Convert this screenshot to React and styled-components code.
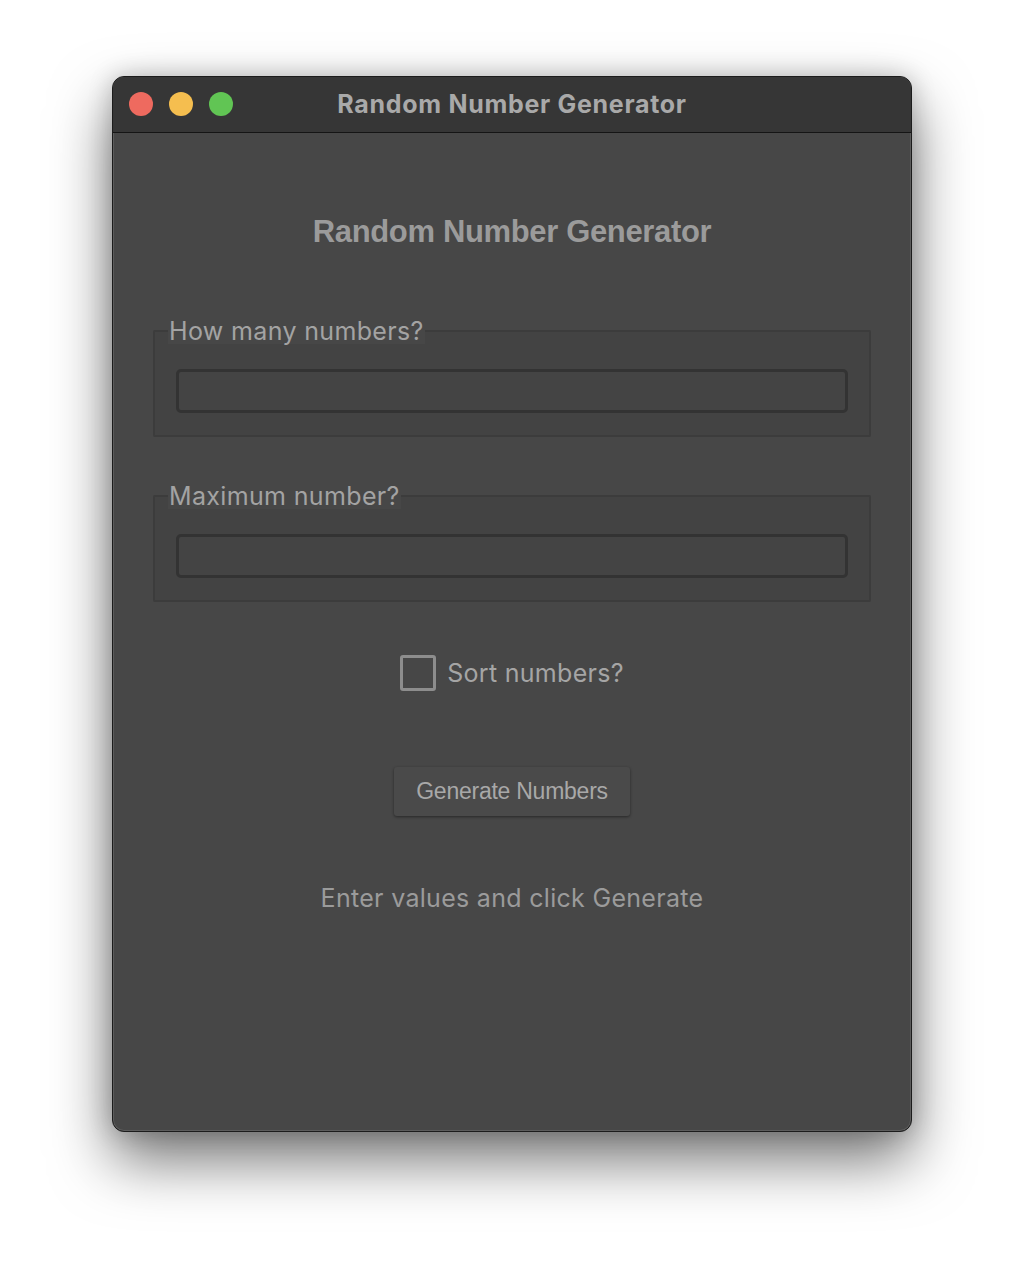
import React from 'react'
import styled, { createGlobalStyle } from 'styled-components'

const Global = createGlobalStyle`
  html, body {
    margin: 0;
    padding: 0;
    background: #ffffff;
  }
  * { box-sizing: border-box; }
`

const Page = styled.div`
  padding: 76px 112px 148px;
  font-family: Inter, "Noto Sans", sans-serif;
`

const Window = styled.div`
  width: 800px;
  height: 1056px;
  border-radius: 12px;
  background: #474747;
  border: 1px solid #1c1c1c;
  box-shadow: inset 0 0 0 1px #5c5c5c, 0 28px 60px rgba(0, 0, 0, 0.55), 0 0 24px rgba(0, 0, 0, 0.2);
  overflow: hidden;
  display: flex;
  flex-direction: column;
`

const TitleBar = styled.div`
  height: 56px;
  flex: none;
  background: #363636;
  border-bottom: 1px solid #151515;
  display: grid;
  grid-template-columns: 1fr auto 1fr;
  align-items: center;
  padding: 0 16px 2px;
`

const Lights = styled.div`
  display: flex;
  gap: 16px;
`

const Light = styled.span`
  width: 24px;
  height: 24px;
  border-radius: 50%;
  background: ${p => p.color};
`

const WindowTitle = styled.div`
  font-weight: 700;
  font-size: 25px;
  color: #a9a9a9;
  letter-spacing: 0.7px;
`

const Body = styled.div`
  flex: 1;
  display: flex;
  flex-direction: column;
  align-items: center;
  padding: 81px 40px 0;
`

const Heading = styled.h1`
  margin: 0 0 68px;
  font-family: "Liberation Sans", Arial, sans-serif;
  font-weight: 700;
  font-size: 31px;
  line-height: 36px;
  letter-spacing: -0.35px;
  color: #9b9b9b;
`

const Group = styled.fieldset`
  align-self: stretch;
  margin: 0 0 ${p => p.gap}px;
  padding: 25px 21px 22px;
  border: 2px solid #3c3c3c;
  border-radius: 2px;
  background: #434343;
  min-width: 0;
`

const Legend = styled.legend`
  margin-left: -8px;
  padding: 0 1px;
  font-size: 25px;
  line-height: 26px;
  letter-spacing: 0.35px;
  color: #a3a3a3;
  background: #474747;
`

const Field = styled.input`
  display: block;
  width: 100%;
  height: 44px;
  border: 3px solid #333333;
  border-radius: 5px;
  background: #444444;
  outline: none;
  color: #bdbdbd;
  font: inherit;
`

const CheckRow = styled.label`
  display: flex;
  align-items: center;
  gap: 11px;
  margin-bottom: 76px;
  font-size: 25px;
  letter-spacing: 0.3px;
  color: #a5a5a5;
`

const Box = styled.span`
  width: 36px;
  height: 36px;
  border: 3px solid #8d8d8d;
  border-radius: 3px;
`

const Button = styled.button`
  width: 236px;
  height: 49px;
  border: none;
  border-radius: 3px;
  background: #4a4a4a;
  box-shadow: 0 1px 3px rgba(0, 0, 0, 0.45);
  font-family: "Liberation Sans", Arial, sans-serif;
  font-size: 23px;
  letter-spacing: -0.25px;
  color: #a8a8a8;
  margin-bottom: 67px;
`

const Status = styled.p`
  margin: 0;
  font-size: 25px;
  line-height: 30px;
  letter-spacing: 0.3px;
  color: #9b9b9b;
`

export default function App() {
  return (
    <Page>
      <Global />
      <Window>
        <TitleBar>
          <Lights>
            <Light color="#ee6a5f" />
            <Light color="#f5be4f" />
            <Light color="#61c554" />
          </Lights>
          <WindowTitle>Random Number Generator</WindowTitle>
        </TitleBar>
        <Body>
          <Heading>Random Number Generator</Heading>
          <Group gap={46}>
            <Legend>How many numbers?</Legend>
            <Field />
          </Group>
          <Group gap={53}>
            <Legend>Maximum number?</Legend>
            <Field />
          </Group>
          <CheckRow>
            <Box />
            Sort numbers?
          </CheckRow>
          <Button>Generate Numbers</Button>
          <Status>Enter values and click Generate</Status>
        </Body>
      </Window>
    </Page>
  )
}
